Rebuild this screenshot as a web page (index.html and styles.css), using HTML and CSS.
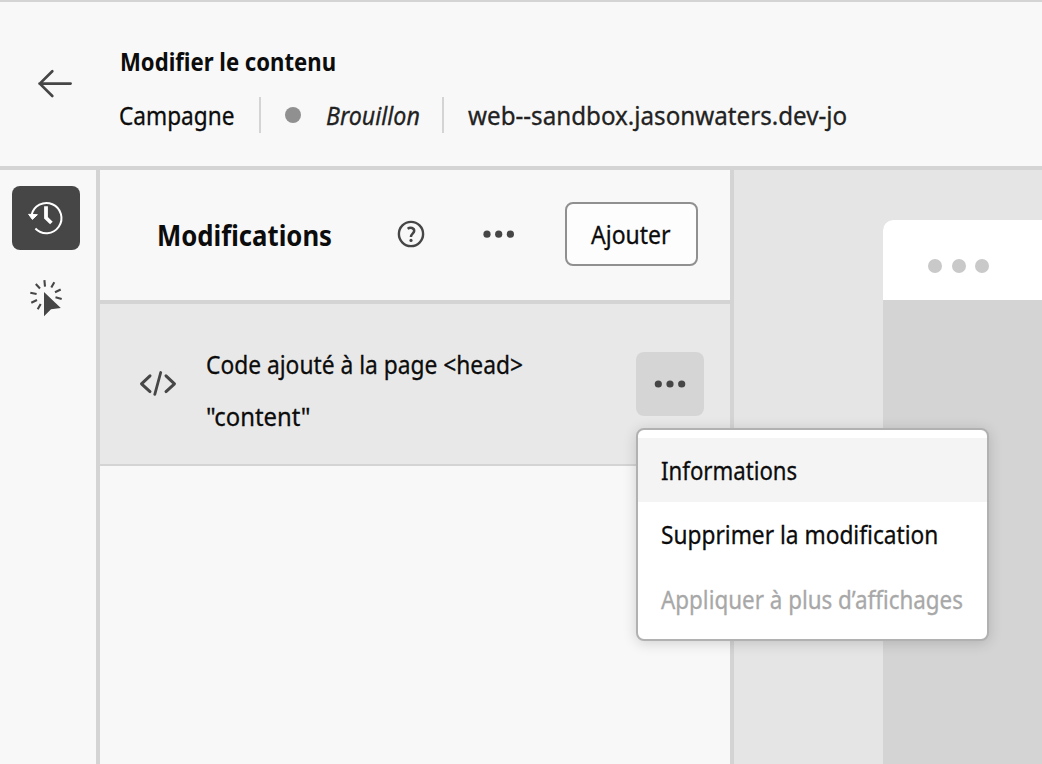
FILE: index.html
```html
<!DOCTYPE html>
<html lang="fr">
<head>
<meta charset="utf-8">
<title>Modifier le contenu</title>
<link rel="stylesheet" href="styles.css">
</head>
<body>
<div class="app">
  <header class="topbar">
    <svg class="back" width="36" height="30" viewBox="0 0 36 30"><path d="M33.6 14.6H2.5M15.3 2.3 2.8 14.6 15.3 27" fill="none" stroke="#464646" stroke-width="2.7" stroke-linecap="round" stroke-linejoin="round"/></svg>
    <div class="heading">
      <h1 class="title"><span class="t t-title">Modifier le contenu</span></h1>
      <div class="meta">
        <div class="campaign"><span class="t t-campaign">Campagne</span></div>
        <div class="status"><i class="dot"></i><span class="t t-status">Brouillon</span></div>
        <div class="url"><span class="t t-url">web--sandbox.jasonwaters.dev-jo</span></div>
      </div>
    </div>
  </header>
  <div class="main">
    <nav class="rail">
      <button class="tool active" aria-label="Historique"><svg width="36" height="36" viewBox="0 0 36 36"><path d="M3.6 15A15.1 15.1 0 1 1 7.4 28.5" fill="none" stroke="#fff" stroke-width="2"/><path d="M0.6 14.3 9.4 14.7 4.4 19.4Z" fill="#fff" stroke="#fff" stroke-linejoin="round"/><path d="M18 6.3V17.8L23.4 23" fill="none" stroke="#fff" stroke-width="3.8"/></svg></button>
      <button class="tool" aria-label="Interaction"><svg width="36" height="40" viewBox="0 0 36 40"><path d="M16 14V38.2L23 31.2 32.8 30Z" fill="#464646"/><path d="M16.4 2.2 17 8.6M26.3 4.2 23.3 9.5M32.7 11.5 27 14.3M33.7 21 27.5 19.2M7.8 6 12 10.4M2.3 14.8 8.6 16M3.3 24.7 9 22M9.7 31.3 12.7 26" fill="none" stroke="#464646" stroke-width="2.1"/></svg></button>
    </nav>
    <section class="panel">
      <div class="panel-head">
        <h2 class="panel-title"><span class="t t-panel">Modifications</span></h2>
        <svg class="help" width="28" height="28" viewBox="0 0 28 28"><circle cx="14" cy="14" r="12.1" fill="none" stroke="#464646" stroke-width="2.4"/><path d="M10.6 8.7C13.5 6.8 17.3 8 17.2 10.9 17.1 13.5 13.9 13.9 13.9 17" fill="none" stroke="#464646" stroke-width="2.5"/><circle cx="14" cy="20.4" r="1.6" fill="#464646"/></svg>
        <svg class="more" width="32" height="8" viewBox="0 0 32 8"><g fill="#464646"><circle cx="4" cy="4.2" r="3.6"/><circle cx="15.7" cy="4.2" r="3.6"/><circle cx="27.4" cy="4.2" r="3.6"/></g></svg>
        <button class="add"><span class="t t-add">Ajouter</span></button>
      </div>
      <div class="item">
        <svg class="code" width="38" height="26" viewBox="0 0 38 26"><path d="M11 5.8 2.5 13.8 11 21.6M27 5.8 35.5 13.8 27 21.6" fill="none" stroke="#464646" stroke-width="3" stroke-linecap="round" stroke-linejoin="round"/><path d="M21.7 2.5 15.8 24.3" stroke="#464646" stroke-width="2.8" stroke-linecap="round"/></svg>
        <div class="item-text">
          <p><span class="t t-code">Code ajouté à la page &lt;head&gt;</span></p>
          <p><span class="t t-content">"content"</span></p>
        </div>
        <div class="actions">
          <button class="item-more" aria-label="Plus"><svg width="32" height="8" viewBox="0 0 32 8"><g fill="#464646"><circle cx="4.3" cy="4" r="3.6"/><circle cx="16" cy="4" r="3.6"/><circle cx="27.7" cy="4" r="3.6"/></g></svg></button>
          <ul class="menu">
            <li class="hover"><span class="t t-info">Informations</span></li>
            <li><span class="t t-del">Supprimer la modification</span></li>
            <li class="disabled"><span class="t t-apply">Appliquer à plus d’affichages</span></li>
          </ul>
        </div>
      </div>
    </section>
    <section class="canvas">
      <div class="browser">
        <div class="browser-bar"><i></i><i></i><i></i></div>
      </div>
    </section>
  </div>
</div>
</body>
</html>
```
FILE: styles.css
```css
* { box-sizing: border-box; }
html, body { margin: 0; height: 100%; overflow: hidden; }
body { font: 25px/32px "Noto Sans", sans-serif; color: #0c0c0c; background: #f8f8f8; }
h1, h2, p, ul { margin: 0; padding: 0; font-size: inherit; }
button { font: inherit; color: inherit; padding: 0; border: 0; background: none; }
svg { display: block; flex: none; }
.app { display: flex; flex-direction: column; height: 100vh; }

/* Condensed labels: each one is narrowed to its own measure */
.t { display: inline-block; white-space: nowrap; transform-origin: 0 50%; -webkit-text-stroke: .3px currentColor; }
.t-title { transform: scaleX(.885); }
.t-campaign { transform: scaleX(.905); }
.t-status { transform: scaleX(.93); }
.t-url { transform: scaleX(.967); }
.t-panel { transform: scaleX(.918); }
.t-add { transform: scaleX(.92); }
.t-code { transform: scaleX(.911); }
.t-content { transform: scaleX(.954); }
.t-info { transform: scaleX(.888); }
.t-del { transform: scaleX(.908); }
.t-apply { transform: scaleX(.896); }

.topbar { display: flex; flex: none; height: 170px; border-top: 2px solid #d4d4d4; border-bottom: 4px solid #d4d4d4; }
.back { margin: 67px 46px 0 37px; }
.heading { padding-top: 43px; }
.title { height: 32px; margin-bottom: 20px; font-weight: 700; padding-left: 1px; }
.t-title, .t-panel { -webkit-text-stroke: 0; }
.meta { display: flex; height: 36px; line-height: 36px; }
.campaign { width: 140px; }
.status { display: flex; align-items: center; width: 185px; padding-left: 24px; border-left: 2px solid #d4d4d4; border-right: 2px solid #d4d4d4; font-style: italic; color: #222; }
.dot { width: 16px; height: 16px; margin-right: 25px; border-radius: 50%; background: #909090; flex: none; }
.url { padding-left: 24px; color: #222; }

.main { display: flex; flex: 1; min-height: 0; }
.rail { display: flex; flex-direction: column; gap: 16px; flex: none; width: 100px; padding: 16px 0 0 12px; border-right: 4px solid #d4d4d4; }
.tool { display: flex; align-items: center; justify-content: center; width: 68px; height: 64px; border-radius: 8px; }
.active { background: #464646; }
.panel { flex: none; width: 634px; border-right: 4px solid #d4d4d4; }
.panel-head { display: flex; align-items: center; height: 134px; padding: 0 32px 2px 57px; border-bottom: 4px solid #d4d4d4; }
.panel-title { width: 240px; padding-top: 2px; font-size: 28px; font-weight: 700; }
.more { margin-left: 58px; }
.add { display: flex; width: 133px; height: 64px; margin-left: auto; padding-left: 24px; line-height: 60px; border: 2px solid #909090; border-radius: 8px; background: #fdfdfd; }
.item { display: flex; height: 162px; padding-left: 39px; background: #e8e8e8; border-bottom: 2px solid #d4d4d4; }
.code { margin-top: 66px; }
.item-text { display: flex; flex-direction: column; gap: 20px; flex: 1; min-width: 0; padding: 44px 0 0 29px; }
.actions { position: relative; flex: none; width: 94px; padding-top: 48px; }
.item-more { display: flex; align-items: center; justify-content: center; width: 68px; height: 64px; border-radius: 8px; background: #d5d5d5; }

.menu { position: absolute; z-index: 2; top: 124px; left: 0; width: 353px; height: 213px; padding: 8px 0; list-style: none; background: #fff; border: 2px solid #b1b1b1; border-radius: 8px; box-shadow: 0 2px 14px rgba(0,0,0,.16); }
.menu li { height: 64px; padding-left: 23px; line-height: 64px; }
.hover { background: #f4f4f4; }
.menu .disabled { line-height: 66px; color: #a8a8a8; }

.canvas { flex: 1; padding: 50px 0 0 149px; background: #e5e5e5; }
.browser { height: 100%; background: #d4d4d4; border-top-left-radius: 10px; overflow: hidden; }
.browser-bar { display: flex; gap: 9.5px; height: 80px; padding: 39px 0 0 45px; background: #fff; }
.browser-bar i { width: 14px; height: 14px; border-radius: 50%; background: #c9c9c9; }
```
